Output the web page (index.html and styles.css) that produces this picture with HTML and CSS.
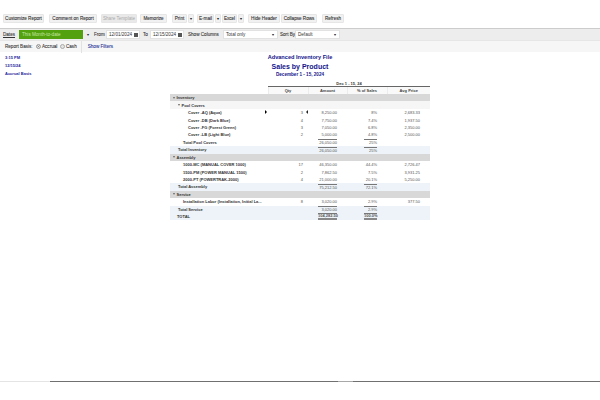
FILE: index.html
```html
<!DOCTYPE html>
<html lang="en">
<head>
<meta charset="utf-8">
<title>Sales by Product</title>
<link rel="stylesheet" href="styles.css">
</head>
<body>
<div class="toolbar">
  <button class="btn w-cust">Customize Report</button>
  <button class="btn w-comm">Comment on Report</button>
  <button class="btn w-share" disabled>Share Template</button>
  <button class="btn w-mem">Memorize</button>
  <span class="split w-print"><button class="btn grow">Print</button><button class="btn caret">▾</button></span>
  <span class="split w-email"><button class="btn grow">E-mail</button><button class="btn caret">▾</button></span>
  <span class="split w-excel"><button class="btn grow">Excel</button><button class="btn caret">▾</button></span>
  <button class="btn w-hide">Hide Header</button>
  <button class="btn w-coll">Collapse Rows</button>
  <button class="btn w-ref">Refresh</button>
</div>
<div class="filters">
  <span class="lbl dates">Dates</span>
  <span class="select green">This Month-to-date<i>▾</i></span>
  <span class="lbl from">From</span>
  <span class="date">12/01/2024<b></b></span>
  <span class="lbl to">To</span>
  <span class="date">12/15/2024<b></b></span>
  <span class="lbl show">Show Columns</span>
  <span class="select cols">Total only<i>▾</i></span>
  <span class="lbl sortby">Sort By</span>
  <span class="select sort">Default<i>▾</i></span>
</div>
<div class="basis">
  <span class="lbl rb">Report Basis:</span>
  <span class="radio on"></span><span class="lbl acc-l">Accrual</span>
  <span class="radio"></span><span class="lbl">Cash</span>
  <span class="sep"></span>
  <span class="link">Show Filters</span>
</div>
<div class="report">
  <div class="meta">
    <p>3:15 PM</p>
    <p>12/15/24</p>
    <p>Accrual Basis</p>
  </div>
  <div class="main">
    <div class="titles">
      <div class="company">Advanced Inventory File</div>
      <div class="title">Sales by Product</div>
      <div class="range">December 1 - 15, 2024</div>
    </div>
    <table class="sheet">
      <colgroup><col class="c0"><col class="c1"><col class="c2"><col class="c3"><col class="c4"></colgroup>
      <thead>
        <tr class="period"><th></th><th colspan="4">Dec 1 - 15, 24</th></tr>
        <tr class="heads"><th></th><th>Qty</th><th>Amount</th><th>% of Sales</th><th>Avg Price</th></tr>
      </thead>
      <tbody>
        <tr class="group"><td colspan="5"><span class="tw"></span>Inventory</td></tr>
        <tr class="sub"><td colspan="5" class="l1b"><span class="tw"></span>Pool Covers</td></tr>
        <tr><td class="l3">Cover -AQ (Aqua)<span class="cursor"></span></td><td class="qty">3<span class="mark"></span></td><td>8,250.00</td><td>8%</td><td>2,683.33</td></tr>
        <tr><td class="l3">Cover -DB (Dark Blue)</td><td class="qty">4</td><td>7,750.00</td><td>7.4%</td><td>1,937.50</td></tr>
        <tr><td class="l3">Cover -FG (Forest Green)</td><td class="qty">3</td><td>7,050.00</td><td>6.8%</td><td>2,350.00</td></tr>
        <tr><td class="l3">Cover -LB (Light Blue)</td><td class="qty">2</td><td>5,000.00</td><td>4.8%</td><td>2,500.00</td></tr>
        <tr><td class="l2">Total Pool Covers</td><td></td><td><span class="u a">26,050.00</span></td><td><span class="u p">25%</span></td><td></td></tr>
        <tr class="tint"><td class="l1">Total Inventory</td><td></td><td><span class="u a">26,050.00</span></td><td><span class="u p">25%</span></td><td></td></tr>
        <tr class="group"><td colspan="5"><span class="tw"></span>Assembly</td></tr>
        <tr><td class="l2">1000-MC (MANUAL COVER 1000)</td><td class="qty">17</td><td>46,350.00</td><td>44.4%</td><td>2,726.47</td></tr>
        <tr><td class="l2">1500-PM (POWER MANUAL 1500)</td><td class="qty">2</td><td>7,862.50</td><td>7.5%</td><td>3,931.25</td></tr>
        <tr><td class="l2">2000-PT (POWERTRAK-2000)</td><td class="qty">4</td><td>21,000.00</td><td>20.1%</td><td>5,250.00</td></tr>
        <tr class="tint"><td class="l1">Total Assembly</td><td></td><td><span class="u a">75,212.50</span></td><td><span class="u p">72.1%</span></td><td></td></tr>
        <tr class="group"><td colspan="5"><span class="tw"></span>Service</td></tr>
        <tr><td class="l2">Installation Labor (Installation, Initial La...</td><td class="qty">8</td><td>3,020.00</td><td>2.9%</td><td>377.50</td></tr>
        <tr class="tint"><td class="l1">Total Service</td><td></td><td><span class="u a">3,020.00</span></td><td><span class="u p">2.9%</span></td><td></td></tr>
        <tr class="tint"><td class="l0">TOTAL</td><td></td><td><span class="dbl a">104,282.50</span></td><td><span class="dbl p">100.0%</span></td><td></td></tr>
      </tbody>
    </table>
  </div>
</div>
<div class="bottom"><span class="b-a"></span><span class="b-b"></span><span class="b-c"></span><span class="b-d"></span></div>
</body>
</html>
```
FILE: styles.css
```css
* { box-sizing: border-box; }
html, body { margin: 0; padding: 0; }
body {
  width: 600px;
  height: 400px;
  overflow: hidden;
  background: #fff;
  font-family: "Liberation Sans", Arial, sans-serif;
  font-size: 4.6px;
  color: #333;
  position: relative;
}
.toolbar {
  display: flex;
  align-items: center;
  height: 28px;
  padding: 8px 0 0 3px;
}
.btn {
  height: 9px;
  padding: 0;
  margin: 0;
  border: 1px solid #e6e6e6;
  border-radius: 1px;
  background: #f1f1f1;
  color: #333;
  font: 4.6px "Liberation Sans", Arial, sans-serif;
  -webkit-text-stroke: 0.1px #333;
  text-align: center;
  white-space: nowrap;
  overflow: hidden;
}
.btn:disabled { color: #aaa; background: #e9e9e9; -webkit-text-stroke: 0; }
.split { display: flex; gap: 1px; }
.grow { flex: 1; }
.caret { width: 6px; font-size: 4px; color: #222; }
.w-cust { width: 41px; }
.w-comm { width: 48px; margin-left: 5px; }
.w-share { width: 36px; margin-left: 4px; }
.w-mem { width: 27px; margin-left: 3px; }
.w-print { width: 22px; margin-left: 5px; }
.w-email { width: 24px; margin-left: 3px; }
.w-excel { width: 22px; margin-left: 1px; }
.w-hide { width: 32px; margin-left: 4px; }
.w-coll { width: 36px; margin-left: 1px; }
.w-ref { width: 22px; margin-left: 5px; }
.filters {
  display: flex;
  align-items: center;
  height: 12px;
  padding-left: 3px;
  background: #ededed;
  border-top: 1px solid #ccc;
}
.lbl { color: #333; white-space: nowrap; -webkit-text-stroke: 0.08px #333; }
.dates { text-decoration: underline; width: 16px; }
.select {
  position: relative;
  display: block;
  height: 9px;
  line-height: 7px;
  padding-left: 2px;
  background: #fff;
  border: 1px solid #e2e2e2;
  white-space: nowrap;
}
.select i {
  position: absolute;
  right: 3px;
  top: 0;
  font-style: normal;
  font-size: 4px;
  color: #222;
}
.green { width: 64px; background: #53a10e; border-color: #53a10e; color: #c8e8a8; }
.green i { right: -7px; }
.from { margin-left: 11px; width: 12px; }
.date {
  display: flex;
  align-items: center;
  justify-content: space-between;
  width: 34px;
  height: 9px;
  padding: 0 1px 0 2px;
  background: #fff;
  border: 1px solid #e2e2e2;
}
.date b { width: 4px; height: 4px; background: #555; }
.to { margin-left: 3px; width: 7px; }
.show { margin-left: 4px; width: 35px; }
.cols { width: 55px; }
.sortby { margin-left: 2px; width: 15px; }
.sort { width: 45px; }
.basis {
  display: flex;
  align-items: center;
  height: 12px;
  padding-left: 5px;
  background: #f6f6f6;
  border-top: 1px solid #e6e6e6;
}
.rb { width: 31px; }
.acc-l { width: 18px; }
.radio {
  width: 5px;
  height: 5px;
  margin-right: 1px;
  border-radius: 50%;
  border: 1px solid #aaa;
  background: #e4e4e4;
}
.radio.on { background: #666; box-shadow: inset 0 0 0 1px #eee; }
.sep { width: 1px; height: 12px; background: #e2e2e2; margin: 0 6px 0 4px; }
.link { color: #2d3a9c; -webkit-text-stroke: 0.1px #2d3a9c; }
.report { display: flex; }
.meta {
  width: 170px;
  padding: 4px 0 0 5px;
  color: #24249a;
  font-weight: bold;
  font-size: 4px;
}
.meta p { margin: 0 0 4.6px; line-height: 3.6px; }
.main { width: 260px; }
.titles { text-align: center; color: #14148c; font-weight: bold; }
.company { font-size: 5.6px; line-height: 7px; margin-top: 2px; }
.title { font-size: 7px; line-height: 11px; }
.range { font-size: 4.6px; line-height: 6px; padding-bottom: 4px; }
.sheet {
  width: 260px;
  table-layout: fixed;
  border-collapse: collapse;
  font-size: 4px;
}
.c0 { width: 98px; }
.c1 { width: 40px; }
.c2 { width: 39px; }
.c3 { width: 40px; }
.c4 { width: 43px; }
.sheet th, .sheet td {
  padding: 0;
  height: 7.45px;
  line-height: 5px;
  white-space: nowrap;
  overflow: hidden;
}
.period th { height: 4px; line-height: 4px; font-weight: bold; color: #333; text-align: center; }
.period th + th { border-bottom: 1px solid #666; }
.heads th {
  height: 7.5px;
  font-weight: bold;
  color: #444;
  text-align: center;
  background: #f9f9f9;
  border-left: 1px solid #ececec;
}
.heads th:first-child { background: #fff; border-left: 0; }
.sheet td { text-align: right; padding-right: 10px; color: #555; }
.sheet td:first-child { text-align: left; padding-right: 0; position: relative; font-weight: bold; color: #333; }
.sheet td.qty { padding-right: 5px; position: relative; }
.group td { background: #d8d8d8; }
.sheet .group td:first-child { padding-left: 3px; }
.sub td { background: #f6f6f6; }
.sheet td.l1b { padding-left: 8px; }
.tint td { background: #edf3f8; }
.sheet td.l0 { padding-left: 7px; }
.sheet td.l1 { padding-left: 8px; }
.sheet td.l2 { padding-left: 13px; }
.sheet td.l3 { padding-left: 18px; }
.u, .dbl { display: inline-block; text-align: right; vertical-align: top; }
.a { width: 19px; }
.p { width: 13px; }
.u { border-top: 1px solid #777; line-height: 5px; }
.dbl { border-top: 1px solid #777; border-bottom: 2px solid #888; font-weight: bold; line-height: 4.4px; }
.tw {
  display: inline-block;
  width: 0;
  height: 0;
  margin-right: 1.5px;
  vertical-align: 0.5px;
  border-left: 1.7px solid transparent;
  border-right: 1.7px solid transparent;
  border-top: 2.2px solid #666;
}
.cursor {
  position: absolute;
  left: 95px;
  top: 1px;
  width: 0;
  height: 0;
  border-left: 2px solid #000;
  border-top: 2px solid transparent;
  border-bottom: 2px solid transparent;
}
.mark {
  position: absolute;
  right: 0;
  top: 1px;
  width: 0;
  height: 0;
  border-right: 2px solid #222;
  border-top: 2px solid transparent;
  border-bottom: 2px solid transparent;
}
.bottom { position: absolute; left: 0; top: 381px; width: 600px; height: 1px; display: flex; }
.b-a { width: 50px; background: #e4e4e4; }
.b-b { width: 288px; background: #707070; }
.b-c { width: 15px; background: #a8a8a8; }
.b-d { flex: 1; background: #707070; }
```
